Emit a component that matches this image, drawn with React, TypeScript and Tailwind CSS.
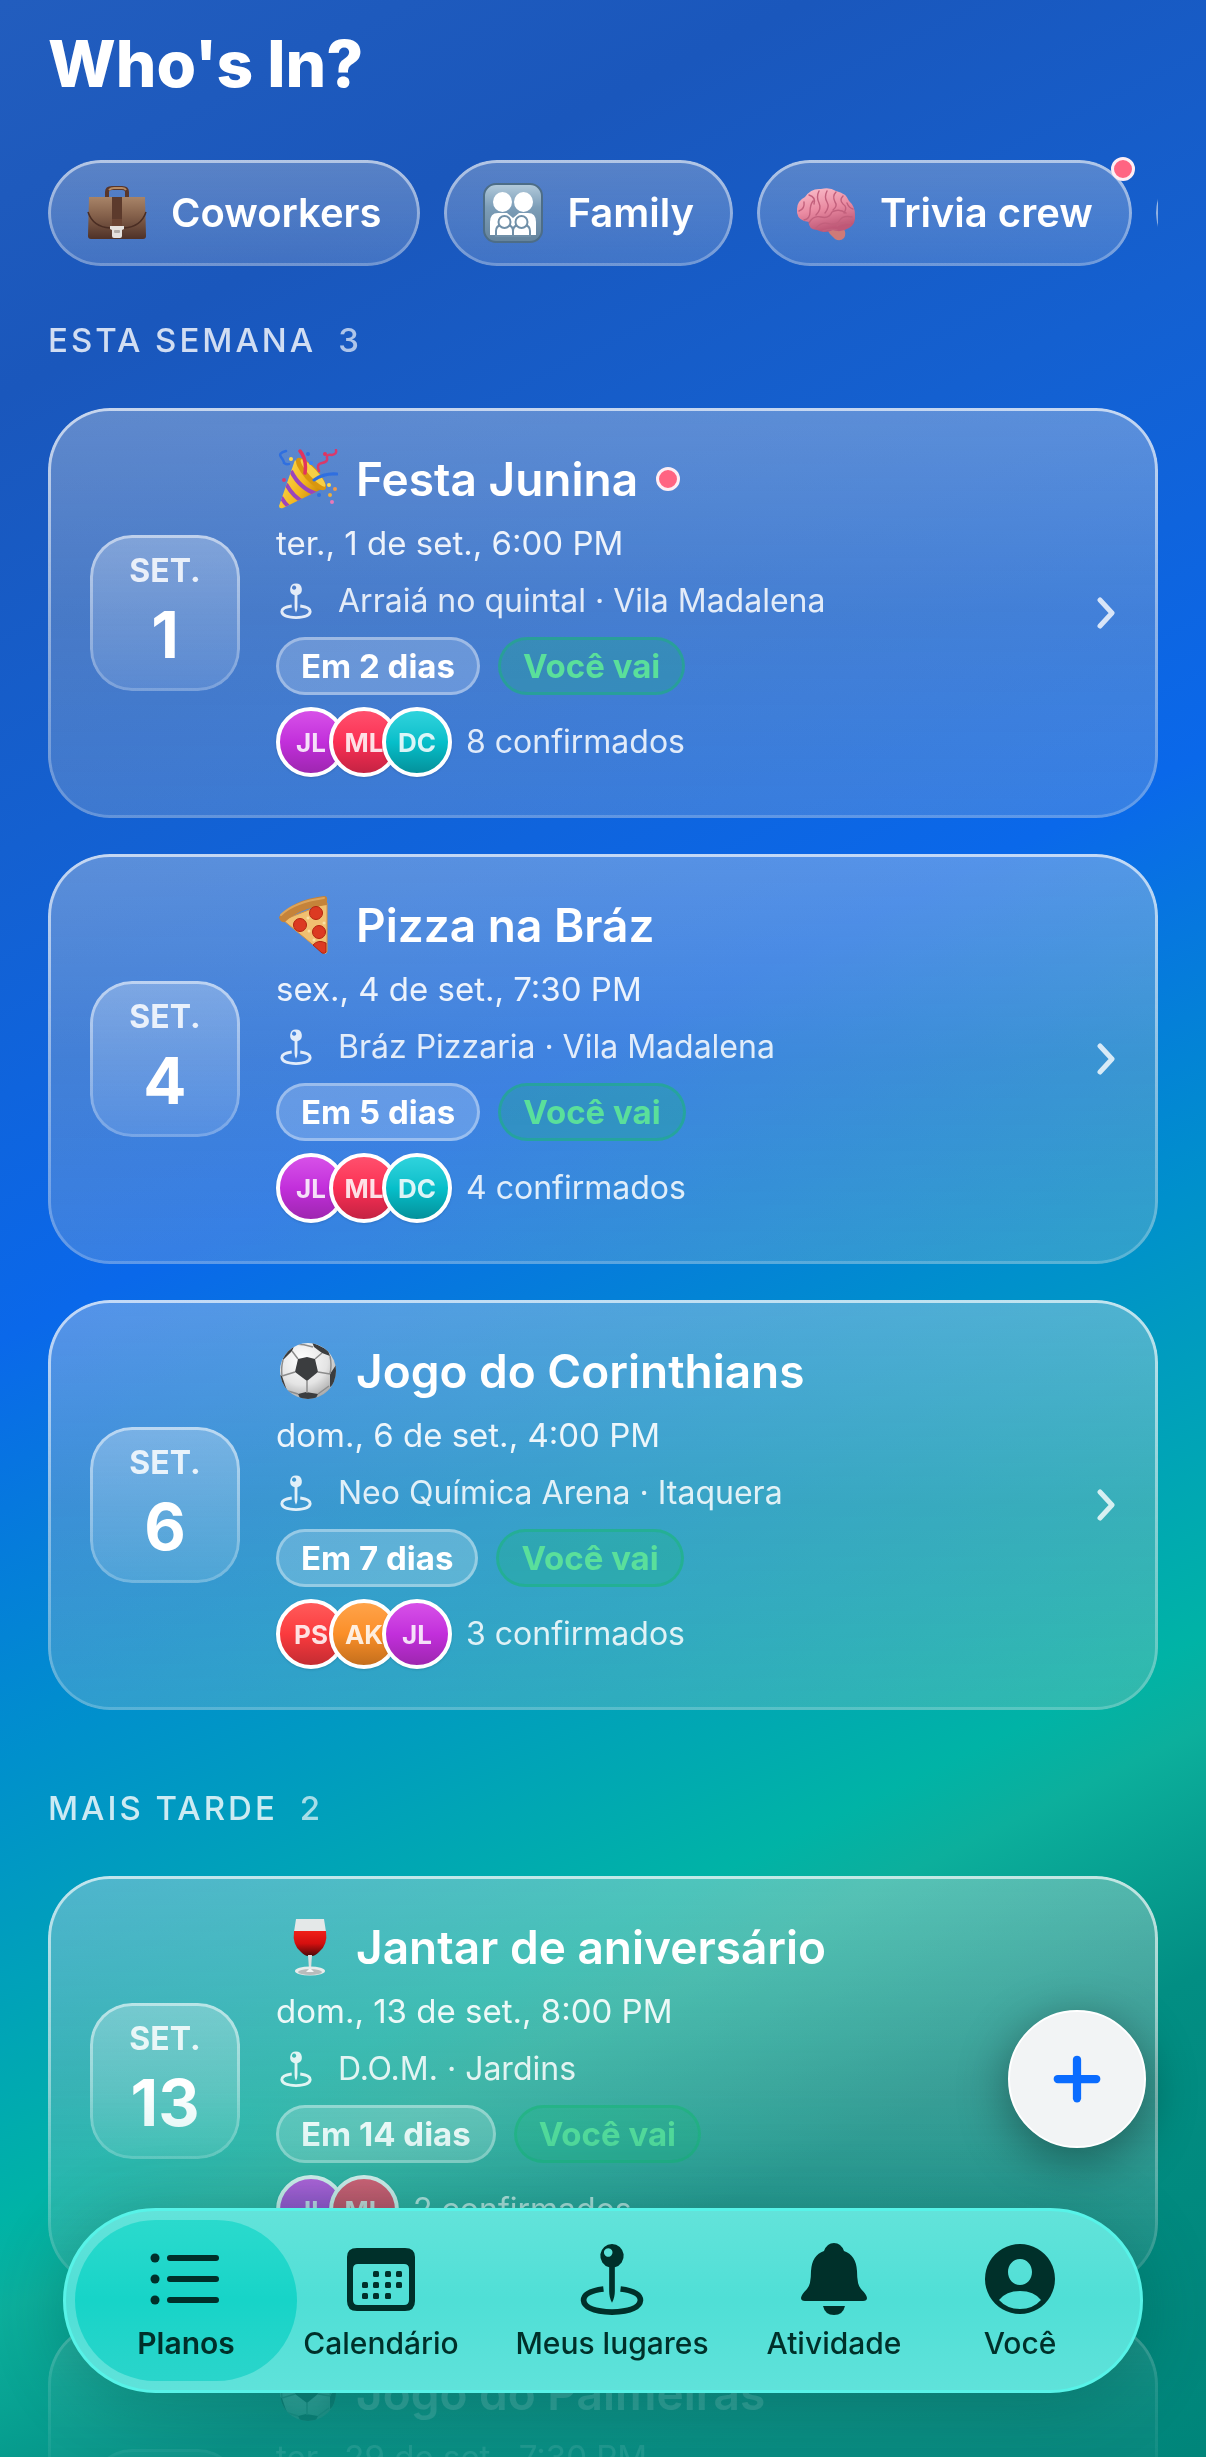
import { Plus } from "lucide-react";

type IconProps = { className?: string };

const ring =
  "before:pointer-events-none before:absolute before:inset-0 before:rounded-[inherit] before:p-[3px] before:bg-linear-to-b before:[mask:linear-gradient(#000_0_0)_content-box_exclude,linear-gradient(#000_0_0)]";

const Briefcase = ({ className }: IconProps) => (
  <svg viewBox="0 0 60 60" className={className} aria-hidden="true">
    <defs>
      <linearGradient id="caseBody" x1="0" y1="0" x2="0" y2="1">
        <stop offset="0" stopColor="#a88468" />
        <stop offset="0.45" stopColor="#84604a" />
        <stop offset="1" stopColor="#4e3128" />
      </linearGradient>
    </defs>
    <path d="M20 14V9q0-4 5-4h10q5 0 5 4v5" fill="none" stroke="#59362a" strokeWidth="4" />
    <path d="M22 7q2-2 5-2h8q3 0 4 2" fill="none" stroke="#b58a62" strokeWidth="2" />
    <path d="M2 14h56l1 39q0 3-3 3H4q-3 0-3-3z" fill="url(#caseBody)" />
    <path d="M1 29q5 15 22 16h14q17-1 22-16" fill="none" stroke="#4a2d23" strokeWidth="1.5" />
    <path d="M25 14h10v29H25z" fill="#6b4433" />
    <path d="M25 14h10v22H25z" fill="#5c3a2c" />
    <path d="M23 43h14v3l-2 1v6q0 2-2 2h-6q-2 0-2-2v-6l-2-1z" fill="#e6e2df" />
    <rect x="27" y="47" width="6" height="3" rx="1" fill="#b3aeaa" />
  </svg>
);

const FamilySign = ({ className }: IconProps) => (
  <svg viewBox="0 0 60 60" className={className} aria-hidden="true">
    <defs>
      <linearGradient id="signFill" x1="0" y1="0" x2="0" y2="1">
        <stop offset="0" stopColor="#b3cbdc" />
        <stop offset="0.4" stopColor="#7d9eb8" />
        <stop offset="1" stopColor="#64839c" />
      </linearGradient>
    </defs>
    <rect x="1" y="1" width="58" height="58" rx="12" fill="url(#signFill)" stroke="#4d6d87" strokeWidth="2" />
    <g fill="#fff">
      <ellipse cx="19.500" cy="19" rx="9.500" ry="10" />
      <ellipse cx="40.500" cy="19" rx="9.500" ry="10" />
      <path d="M7 52V39q0-9 8-9h9l6 5 6-5h9q8 0 8 9v13z" />
    </g>
    <g fill="#fff" stroke="#7190a8" strokeWidth="2">
      <path d="M13 53v-5q0-5 5-6h7q5 1 5 6v5zM30 53v-5q0-5 5-6h7q5 1 5 6v5z" />
      <circle cx="21.500" cy="39" r="6" />
      <circle cx="38.500" cy="39" r="6" />
    </g>
  </svg>
);

const Brain = ({ className }: IconProps) => (
  <svg viewBox="0 0 60 60" className={className} aria-hidden="true">
    <defs>
      <linearGradient id="brainFill" x1="0" y1="0" x2="0.3" y2="1">
        <stop offset="0" stopColor="#fbc0cc" />
        <stop offset="0.55" stopColor="#ea8ba2" />
        <stop offset="1" stopColor="#bf5877" />
      </linearGradient>
    </defs>
    <path d="M30 45q7-3 17 0 4 5 1 10-4 4-9 1-6-5-9-11z" fill="#cf7a78" />
    <path
      d="M8 38q-8-3-7-12 0-8 8-12Q15 5 25 6q9-2 15 2 10 2 13 10 6 5 6 14 1 9-6 13-8 5-16 2-8 4-16 0-9-1-8-8z"
      fill="url(#brainFill)"
    />
    <path
      d="M3 28q6-2 5-9M8 37q6-1 6-8t3-11M13 12q7 2 5 9M23 8q-3 6 0 12t-3 12M31 8q-3 6 0 11t-2 11M40 9q-4 4-1 10 3 4-2 8M47 13q-4 4 0 8 5 3 1 9M13 40q4-8 12-6t11-5q7-4 14 1M20 45q6-7 14-4 7 1 10-4t12-3M27 48q7-3 14-1M41 43q5-5 13-3M51 20q2 5 6 6"
      fill="none"
      stroke="#c2607c"
      strokeWidth="1.400"
      strokeLinecap="round"
    />
  </svg>
);

const PartyPopper = ({ className }: IconProps) => (
  <svg viewBox="0 0 60 60" className={className} aria-hidden="true">
    <defs>
      <linearGradient id="coneFill" x1="0" y1="0" x2="1" y2="0.500">
        <stop offset="0" stopColor="#ffe25a" />
        <stop offset="0.600" stopColor="#f2b71f" />
        <stop offset="1" stopColor="#c98507" />
      </linearGradient>
      <clipPath id="coneClip">
        <path d="M17 11 1 57q0 3 4 2l43-21Q34 31 17 11z" />
      </clipPath>
    </defs>
    <path d="M17 11 1 57q0 3 4 2l43-21Q34 31 17 11z" fill="url(#coneFill)" />
    <g clipPath="url(#coneClip)" stroke="#9b45bb" strokeWidth="4" fill="none">
      <path d="M13 22q9 18 26 23M8 35q8 14 18 18M3 48q4 7 9 11" />
    </g>
    <ellipse cx="33" cy="25" rx="21" ry="7" transform="rotate(48 33 25)" fill="#d9960e" />
    <ellipse cx="35" cy="24" rx="18" ry="4" transform="rotate(48 35 24)" fill="#f7cf45" />
    <path d="M27 24q2-14-5-22" fill="none" stroke="#e2335f" strokeWidth="3.500" strokeLinecap="round" />
    <path d="M8 2Q0 4 3 8t3 6q3 2 5 1" fill="none" stroke="#2f6fe0" strokeWidth="2.500" strokeLinecap="round" />
    <path d="M41 22q-3-7 3-8t5-5 5-3q5-1 4-5" fill="none" stroke="#d93a6b" strokeWidth="2.500" strokeLinecap="round" />
    <path d="M36 31q10-7 23-6" fill="none" stroke="#2f6fe0" strokeWidth="3" strokeLinecap="round" />
    <circle cx="13" cy="10" r="2" fill="#ffd84a" />
    <circle cx="30" cy="5" r="2" fill="#2f6fe0" />
    <circle cx="33" cy="14" r="2" fill="#3b82f6" />
    <circle cx="47" cy="5" r="2" fill="#e2335f" />
    <circle cx="6" cy="31" r="2" fill="#d93a6b" />
    <circle cx="51" cy="36" r="2" fill="#ffd84a" />
    <circle cx="57" cy="40" r="2" fill="#f09a4a" />
    <circle cx="41" cy="46" r="2" fill="#2f6fe0" />
    <circle cx="52" cy="46" r="2" fill="#f0b03a" />
    <circle cx="54" cy="53" r="2" fill="#e879b9" />
  </svg>
);

const Pizza = ({ className }: IconProps) => (
  <svg viewBox="0 0 60 60" className={className} aria-hidden="true">
    <path d="M5 25 49 8v49q-1 3-4 1z" fill="#f1c071" />
    <path d="M5 25 49 8v49l-4 1z" fill="none" stroke="#d89340" strokeWidth="1" />
    <path d="M1 22Q14 5 46 1q4 0 3 5v4Q22 13 7 27 2 28 1 22z" fill="#c5833a" />
    <path d="M3 20Q16 7 46 3" fill="none" stroke="#dda45a" strokeWidth="2" strokeLinecap="round" />
    <g fill="#dc3a22" stroke="#b3240f" strokeWidth="1">
      <circle cx="38" cy="18" r="6.500" />
      <circle cx="22" cy="30" r="6.500" />
      <circle cx="41" cy="37" r="6.500" />
      <path d="M35 50q5-6 13-2v9q-1 2-4 1z" />
    </g>
    <g fill="#fbe0a2">
      <circle cx="30" cy="23" r="1.500" />
      <circle cx="31" cy="36" r="1.500" />
      <circle cx="46" cy="28" r="1.500" />
      <circle cx="36" cy="45" r="1.500" />
    </g>
  </svg>
);

const SoccerBall = ({ className }: IconProps) => (
  <svg viewBox="0 0 60 60" className={className} aria-hidden="true">
    <defs>
      <radialGradient id="ballFill" cx="0.400" cy="0.300" r="0.750">
        <stop offset="0" stopColor="#fff" />
        <stop offset="0.600" stopColor="#e4e4e4" />
        <stop offset="1" stopColor="#a4a4a4" />
      </radialGradient>
      <clipPath id="ballClip">
        <circle cx="30" cy="30" r="28" />
      </clipPath>
    </defs>
    <circle cx="30" cy="30" r="28" fill="url(#ballFill)" />
    <g clipPath="url(#ballClip)" fill="#3b3d3f">
      <path d="M20 18l9-2 8 2 3 13-11 9-12-9z" />
      <path d="M34 1l16 8 2 6-8-3-8-6zM2 12l10-8 5-1-3 7-9 9zM0 33l4 2 3 9 3 8-9-6zM58 24l-6 9 0 13 8-6zM20 53l8-2 12 2-3 6H23z" />
    </g>
    <g clipPath="url(#ballClip)" fill="none" stroke="#8c8c8c" strokeWidth="1.500">
      <path d="M20 18l-6-8M37 18l7-6M40 31l12 2M29 40v12M17 31L4 35M10 50l10 3M40 53l11-8M17 3q9 0 18 3M5 19q-2 7-1 16M52 15q2 9 0 18" />
    </g>
  </svg>
);

const WineGlass = ({ className }: IconProps) => (
  <svg viewBox="0 0 60 60" className={className} aria-hidden="true">
    <defs>
      <linearGradient id="wineFill" x1="0" y1="0" x2="0" y2="1">
        <stop offset="0" stopColor="#f02018" />
        <stop offset="0.500" stopColor="#d40f0f" />
        <stop offset="1" stopColor="#4d0808" />
      </linearGradient>
    </defs>
    <path d="M18 2h28l2 13H16z" fill="#e4e8e8" />
    <path d="M16 14h32q2 14-7 21-4 4-7 4h-4q-3 0-7-4-9-7-7-21z" fill="url(#wineFill)" />
    <path d="M30 38h4l-1 14h-2z" fill="#dcdede" />
    <ellipse cx="32" cy="54" rx="15" ry="4.500" fill="#e9ecec" />
    <ellipse cx="32" cy="55" rx="12" ry="3" fill="#b9bcbc" />
    <path d="M31 52h2l3 3h-8z" fill="#f5f5f5" />
  </svg>
);

const PinIcon = ({ className }: IconProps) => (
  <svg viewBox="0 0 68 76" className={className} aria-hidden="true">
    <path
      fillRule="evenodd"
      fill="currentColor"
      d="M34 1a12.500 12.500 0 0 1 3 24.600V51q0 7-3 12-3-5-3-12V25.600A12.500 12.500 0 0 1 34 1zm-4 4.500a4.500 4.500 0 1 0 .01 0z"
    />
    <path d="M25 48.500Q4 51 4 60.500 5 72 34 73q29-1 30-12.500Q64 51 43 48.500" fill="none" stroke="currentColor" strokeWidth="6" />
  </svg>
);

const ListIcon = ({ className }: IconProps) => (
  <svg viewBox="0 0 72 72" className={className} fill="currentColor" aria-hidden="true">
    <circle cx="5" cy="15" r="4.500" />
    <circle cx="5" cy="36" r="4.500" />
    <circle cx="5" cy="57" r="4.500" />
    <path d="M20 15h46M20 36h46M20 57h46" stroke="currentColor" strokeWidth="6" strokeLinecap="round" />
  </svg>
);

const dayDots = [
  [31, 31], [43, 31], [54, 31],
  [20, 42], [31, 42], [43, 42], [54, 42],
  [20, 53], [31, 53], [43, 53],
];

const CalendarIcon = ({ className }: IconProps) => (
  <svg viewBox="0 0 72 72" className={className} fill="currentColor" aria-hidden="true">
    <path
      fillRule="evenodd"
      d="M12 5h48q10 0 10 9v44q0 10-10 10H12Q2 68 2 58V14q0-9 10-9zm1 16q-5 0-5 5v31q0 5 5 5h46q5 0 5-5V26q0-5-5-5z"
    />
    {dayDots.map(([x, y]) => (
      <rect key={`${x}-${y}`} x={x - 3} y={y - 3} width="6" height="6" rx="1.500" />
    ))}
  </svg>
);

const BellIcon = ({ className }: IconProps) => (
  <svg viewBox="0 0 72 72" className={className} fill="currentColor" aria-hidden="true">
    <path d="M36 0q7 0 10 8 12 4 13 20 0 14 4 18 6 6 6 9 0 3-4 3H7q-4 0-4-3 0-3 6-9 4-4 4-18 1-16 13-20 3-8 10-8z" />
    <path d="M25 63h22q-2 9-11 9t-11-9z" />
  </svg>
);

const PersonIcon = ({ className }: IconProps) => (
  <svg viewBox="0 0 72 72" className={className} fill="currentColor" aria-hidden="true">
    <path
      fillRule="evenodd"
      d="M36 1a35 35 0 1 1-.01 0zm0 15c-7 0-12 6-12 13s5 13 12 13 12-6 12-13-5-13-12-13zM15 57q8 9 21 9t21-9q-7-9-21-9t-21 9z"
    />
  </svg>
);

const groups = [
  { name: "Coworkers", Icon: Briefcase, unread: false },
  { name: "Family", Icon: FamilySign, unread: false },
  { name: "Trivia crew", Icon: Brain, unread: true },
  { name: "Futebol", Icon: SoccerBall, unread: false },
];

const avatarColors: Record<string, string> = {
  JL: "from-[#d750e8] via-[#c22fdb] to-[#9e26b0]",
  ML: "from-[#ff4f6d] via-[#fb2f54] to-[#c42343]",
  DC: "from-[#2ed3dd] via-[#06bfca] to-[#04919b]",
  PS: "from-[#ff5a5a] via-[#fb3a3e] to-[#c42c32]",
  AK: "from-[#ffa349] via-[#fb8f28] to-[#c46f1d]",
};

type Plan = {
  title: string;
  Icon: (props: IconProps) => React.JSX.Element;
  day: number;
  when: string;
  place: string;
  countdown: string;
  people: string[];
  confirmed: number;
  unread?: boolean;
};

const thisWeek: Plan[] = [
  { title: "Festa Junina", Icon: PartyPopper, day: 1, when: "ter., 1 de set., 6:00 PM", place: "Arraiá no quintal · Vila Madalena", countdown: "Em 2 dias", people: ["JL", "ML", "DC"], confirmed: 8, unread: true },
  { title: "Pizza na Bráz", Icon: Pizza, day: 4, when: "sex., 4 de set., 7:30 PM", place: "Bráz Pizzaria · Vila Madalena", countdown: "Em 5 dias", people: ["JL", "ML", "DC"], confirmed: 4 },
  { title: "Jogo do Corinthians", Icon: SoccerBall, day: 6, when: "dom., 6 de set., 4:00 PM", place: "Neo Química Arena · Itaquera", countdown: "Em 7 dias", people: ["PS", "AK", "JL"], confirmed: 3 },
];

const later: Plan[] = [
  { title: "Jantar de aniversário", Icon: WineGlass, day: 13, when: "dom., 13 de set., 8:00 PM", place: "D.O.M. · Jardins", countdown: "Em 14 dias", people: ["JL", "ML"], confirmed: 2 },
  { title: "Jogo do Palmeiras", Icon: SoccerBall, day: 29, when: "ter., 29 de set., 7:30 PM", place: "Allianz Parque · Perdizes", countdown: "Em 30 dias", people: ["PS", "AK"], confirmed: 2 },
];

const UnreadDot = ({ className = "" }: IconProps) => (
  <span className={`size-6 rounded-full border-3 border-[#fdeef4] bg-[#ff6482] ${className}`} />
);

const GroupChips = () => (
  <div className="-my-3 flex gap-6 overflow-hidden py-3">
    {groups.map(({ name, Icon, unread }) => (
      <button
        key={name}
        className={`relative flex h-[106px] shrink-0 items-center gap-6 rounded-full bg-linear-to-b from-[#dcdcdc]/32 to-[#dcdcdc]/20 px-[39px] text-[40px] font-semibold before:from-white/55 before:to-white/25 ${ring}`}
      >
        <Icon className="size-15" />
        {name}
        {unread && <UnreadDot className="absolute -top-[3px] -right-[3px]" />}
      </button>
    ))}
  </div>
);

const Avatars = ({ people }: { people: string[] }) => (
  <div className="flex">
    {people.map((initials) => (
      <span
        key={initials}
        className={`-ml-[17px] flex size-[70px] items-center justify-center rounded-full border-4 border-white bg-linear-to-b text-[26px] font-bold shadow-sm first:ml-0 ${avatarColors[initials]}`}
      >
        {initials}
      </span>
    ))}
  </div>
);

const PlanCard = ({ plan }: { plan: Plan }) => (
  <a
    href="#plano"
    className={`relative flex items-center gap-9 rounded-[62px] bg-linear-to-b from-[#e8e8e8]/34 via-[#c8c8c8]/28 to-[#d2d2d2]/22 px-[42px] py-[41px] before:from-white/65 before:to-white/20 ${ring}`}
  >
    <div
      className={`relative flex h-[156px] w-[150px] shrink-0 flex-col items-center rounded-[42px] bg-linear-to-b from-white/28 to-white/12 pt-3 before:from-white/50 before:to-white/20 ${ring}`}
    >
      <span className="text-[32px] leading-12 font-bold text-white/85">SET.</span>
      <span className="text-[64px] leading-20 font-bold">{plan.day}</span>
    </div>
    <div className="flex min-w-0 flex-1 flex-col gap-3">
      <h3 className="flex h-15 items-center gap-[18px] pl-0.5 text-[46px] font-semibold">
        <plan.Icon className="size-15" />
        {plan.title}
        {plan.unread && <UnreadDot />}
      </h3>
      <p className="text-[33px] leading-11 text-white/90">{plan.when}</p>
      <p className="flex h-12 items-center gap-[22px] text-[32px] text-white/85">
        <PinIcon className="h-9 w-10" />
        {plan.place}
      </p>
      <div className="flex gap-[18px] text-[33px] leading-[52px] font-bold">
        <span className="rounded-full border-3 border-white/35 bg-white/20 px-[22px]">{plan.countdown}</span>
        <span className="rounded-full border-3 border-[#19b973]/45 bg-[#19b973]/25 px-[22px] text-[#5adf9b]">Você vai</span>
      </div>
      <div className="flex items-center gap-[14px] text-[32px] text-white/85">
        <Avatars people={plan.people} />
        {plan.confirmed} confirmados
      </div>
    </div>
    <svg viewBox="0 0 20 32" className="h-8 w-5 text-white/80" aria-hidden="true">
      <path d="M4 3l12 13L4 29" fill="none" stroke="currentColor" strokeWidth="5" strokeLinecap="round" strokeLinejoin="round" />
    </svg>
  </a>
);

const PlanSection = ({ title, plans, count }: { title: string; plans: Plan[]; count: number }) => (
  <section>
    <h2 className="mb-11 flex gap-[22px] text-[33px] leading-12 font-medium tracking-[3px] text-white/80">
      {title}
      <span className="text-white/65">{count}</span>
    </h2>
    <div className="flex flex-col gap-9">
      {plans.map((plan) => (
        <PlanCard key={plan.title} plan={plan} />
      ))}
    </div>
  </section>
);

const tabs = [
  { label: "Planos", Icon: ListIcon, active: true },
  { label: "Calendário", Icon: CalendarIcon, active: false },
  { label: "Meus lugares", Icon: PinIcon, active: false },
  { label: "Atividade", Icon: BellIcon, active: false },
  { label: "Você", Icon: PersonIcon, active: false },
];

const TabBar = () => (
  <nav className="fixed inset-x-[63px] bottom-16 grid h-[185px] grid-cols-[222fr_168fr_294fr_150fr_222fr] rounded-full border-3 border-[#57f3e8] bg-linear-to-b from-[#62e3da] via-[#4fdfd6] to-[#5fe2da] p-[9px] text-[#00302a] shadow-[0_10px_70px_rgba(0,70,62,0.3)]">
    {tabs.map(({ label, Icon, active }) => (
      <button
        key={label}
        aria-current={active ? "page" : undefined}
        className={`flex flex-col items-center justify-center gap-1.5 rounded-full pt-1.5 text-[30px] whitespace-nowrap ${active ? "bg-linear-to-b from-[#2adacd] via-[#16d4c8] to-[#2ad5cb] font-semibold" : "font-medium"}`}
      >
        <Icon className="size-[72px]" />
        <span className="leading-11">{label}</span>
      </button>
    ))}
  </nav>
);

export default function App() {
  return (
    <div className="h-screen overflow-hidden bg-[linear-gradient(154deg,#225dbe_0%,#1a57bc_13%,#1460d0_28%,#0a68ea_44%,#0090cc_58%,#00b3a6_73%,#0caf9c_76%,#028e83_84%,#00857a_100%)] font-['Inter',sans-serif] text-white">
      <main className="h-full overflow-hidden px-12 pt-6 [mask-image:linear-gradient(to_bottom,#000_calc(100%-370px),rgb(0_0_0/0.75)_calc(100%-260px),rgb(0_0_0/0.2)_calc(100%-70px),rgb(0_0_0/0.12)_100%)]">
        <h1 className="mb-14 text-[64px] leading-20 font-extrabold">Who's In?</h1>
        <GroupChips />
        <div className="mt-[50px] flex flex-col gap-[74px]">
          <PlanSection title="ESTA SEMANA" plans={thisWeek} count={3} />
          <PlanSection title="MAIS TARDE" plans={later} count={2} />
        </div>
      </main>
      <button
        aria-label="Novo plano"
        className="fixed right-15 bottom-[309px] flex size-[138px] items-center justify-center rounded-full border-2 border-white bg-[#f2f4f5] text-[#0a6cff] shadow-[0_12px_50px_rgba(0,0,0,0.4)]"
      >
        <Plus className="size-[66px]" strokeWidth={3} />
      </button>
      <TabBar />
    </div>
  );
}
